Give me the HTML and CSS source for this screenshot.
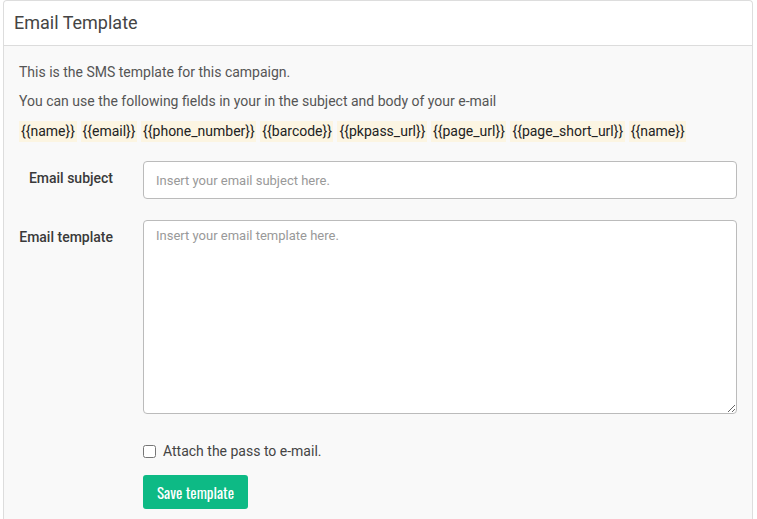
FILE: index.html
```html
<!DOCTYPE html>
<html>
<head>
<meta charset="utf-8">
<link rel="stylesheet" href="styles.css">
</head>
<body>
<div class="panel">
  <div class="panel-head"><h2 class="panel-title">Email Template</h2></div>
  <div class="panel-body">
    <p class="intro">This is the SMS template for this campaign.</p>
    <p class="intro">You can use the following fields in your in the subject and body of your e-mail</p>
    <div class="tags">
      <span class="tag">{{name}}</span>
      <span class="tag">{{email}}</span>
      <span class="tag">{{phone_number}}</span>
      <span class="tag">{{barcode}}</span>
      <span class="tag">{{pkpass_url}}</span>
      <span class="tag">{{page_url}}</span>
      <span class="tag">{{page_short_url}}</span>
      <span class="tag">{{name}}</span>
    </div>
    <form class="form">
      <label class="form-label" for="subj">Email subject</label>
      <input class="form-input" id="subj" type="text" placeholder="Insert your email subject here.">
      <label class="form-label" for="tpl">Email template</label>
      <textarea class="form-area" id="tpl" placeholder="Insert your email template here."></textarea>
      <div class="form-spacer"></div>
      <label class="check"><input type="checkbox" class="check-box"><span>Attach the pass to e-mail.</span></label>
      <div class="form-spacer"></div>
      <div><button type="button" class="btn">Save template</button></div>
    </form>
  </div>
</div>
</body>
</html>
```

FILE: styles.css
```css
html, body {
  margin: 0;
  padding: 0;
  background: #ffffff;
  font-family: Roboto, "Liberation Sans", sans-serif;
}
.panel {
  margin-left: 3px;
  width: 748px;
  height: 540px;
  border: 1px solid #dddddd;
  border-bottom: none;
  border-radius: 4px 4px 0 0;
  background: #f9f9f9;
  box-sizing: content-box;
}
.panel-head {
  background: #ffffff;
  height: 44px;
  border-bottom: 1px solid #dcdcdc;
  border-radius: 4px 4px 0 0;
  display: flex;
  align-items: center;
  padding: 0 10px;
}
.panel-title {
  margin: 0;
  font-size: 18px;
  font-weight: 400;
  color: #444444;
  padding-top: 12px;
  line-height: 20px;
  align-self: flex-start;
}
.panel-body {
  padding: 16px 15px 0 15px;
}
.intro {
  margin: 0 0 9px 0;
  font-size: 14px;
  line-height: 20px;
  color: #555555;
}
.tags {
  display: flex;
  gap: 4px;
  padding-top: 1px;
  margin-bottom: 19px;
}
.tag {
  background: #fcf5e2;
  color: #222222;
  font-size: 14px;
  line-height: 21px;
  padding: 0 1.5px 0 2px;
}
.form {
  display: grid;
  grid-template-columns: 94px 1fr;
  column-gap: 30px;
  row-gap: 21px;
  margin: 0;
}
.form-label {
  text-align: right;
  font-size: 14px;
  font-weight: 500;
  color: #3a3a3a;
  line-height: 20px;
  padding-top: 7px;
}
.form-input, .form-area {
  box-sizing: border-box;
  width: 100%;
  border: 1px solid #bbbbbb;
  border-radius: 4px;
  background: #ffffff;
  font-family: Roboto, "Liberation Sans", sans-serif;
  font-size: 13px;
  color: #333;
  padding: 0 12px;
  margin: 0;
}
.form-input {
  height: 38px;
}
.form-area {
  height: 194px;
  padding-top: 7px;
  resize: vertical;
}
.form-input::placeholder, .form-area::placeholder {
  color: #999999;
}
.form-spacer {
  min-height: 1px;
}
.check {
  display: flex;
  align-items: center;
  gap: 7px;
  font-size: 14px;
  color: #444444;
  line-height: 20px;
  margin-top: 6px;
  margin-bottom: -7px;
}
.check-box {
  margin: 0;
  width: 13px;
  height: 13px;
}
.btn {
  background: #0dba85;
  color: #ffffff;
  border: none;
  border-radius: 3px;
  width: 105px;
  height: 34px;
  font-family: "Oswald", "Liberation Sans Narrow", "DejaVu Sans Condensed", sans-serif;
  font-stretch: condensed;
  font-size: 15px;
  padding: 0;
  cursor: pointer;
}
```
